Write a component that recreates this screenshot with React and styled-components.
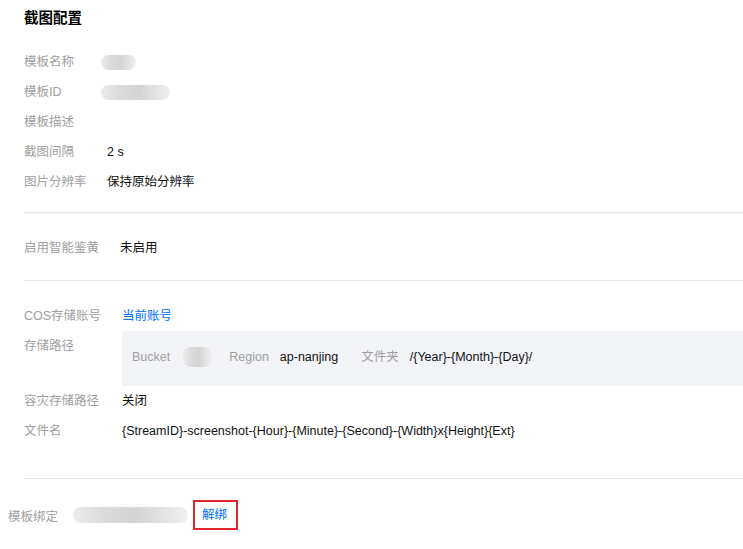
import React from "react";
import styled, { createGlobalStyle } from "styled-components";

const GlobalStyle = createGlobalStyle`
  body {
    margin: 0;
    background: #fff;
    font-family: "Liberation Sans", "Noto Sans CJK SC", Arial, sans-serif;
    font-size: 12.5px;
    color: #000;
  }
`;

const Page = styled.div`
  width: 743px;
  height: 549px;
  overflow: hidden;
`;

const Title = styled.h3`
  margin: 0 0 11px 24px;
  height: 36px;
  line-height: 36px;
  font-size: 14.5px;
  font-weight: bold;
  color: #000;
`;

const Section = styled.div`
  margin-left: ${(p) => p.$indent}px;
  padding: ${(p) => p.$top}px 0 ${(p) => p.$bottom}px;
  border-bottom: ${(p) => (p.$last ? "none" : "1px solid #e6e6e6")};
`;

const Row = styled.div`
  display: flex;
  align-items: flex-start;
  min-height: 30px;
  line-height: 30px;
`;

const Label = styled.div`
  flex: none;
  width: ${(p) => p.$w}px;
  color: #a0a0a0;
  white-space: nowrap;
`;

const Value = styled.div`
  flex: 1;
  color: ${(p) => (p.$link ? "#006eff" : "#111")};
  white-space: nowrap;
`;

const Blur = styled.span`
  display: inline-block;
  vertical-align: middle;
  width: ${(p) => p.$w}px;
  height: ${(p) => p.$h || 15}px;
  border-radius: 8px;
  background: linear-gradient(
    90deg,
    #ececec 0%,
    #dcdcdc 25%,
    #d4d4d4 55%,
    #e4e4e4 80%,
    #f0f0f0 100%
  );
  filter: blur(0.6px);
`;

const PathBox = styled.div`
  flex: 1;
  display: flex;
  align-items: center;
  height: 55px;
  padding: 0 0 3px 10px;
  box-sizing: border-box;
  background: #f3f4f7;
`;

const PathItem = styled.span`
  display: inline-flex;
  align-items: center;
  margin-right: ${(p) => p.$gap}px;
`;

const PathKey = styled.span`
  color: #a0a0a0;
  margin-right: ${(p) => p.$gap || 11}px;
`;

const PathVal = styled.span`
  color: #111;
`;

const Unbind = styled.a`
  display: inline-block;
  margin-left: 5px;
  padding: 0 9px 0 7px;
  height: 26px;
  line-height: 26px;
  border: 2px solid #e1262e;
  color: #006eff;
  text-decoration: none;
  cursor: pointer;
  vertical-align: middle;
`;

const BindRow = styled.div`
  display: flex;
  align-items: center;
  height: 30px;
`;

export default function App() {
  return (
    <Page>
      <GlobalStyle />
      <Title>截图配置</Title>
      <Section $indent={24} $top={0} $bottom={15}>
        <Row>
          <Label $w={77}>模板名称</Label>
          <Value>
            <Blur $w={35} $h={15} />
          </Value>
        </Row>
        <Row>
          <Label $w={77}>模板ID</Label>
          <Value>
            <Blur $w={69} $h={15} />
          </Value>
        </Row>
        <Row>
          <Label $w={77}>模板描述</Label>
          <Value />
        </Row>
        <Row>
          <Label $w={83}>截图间隔</Label>
          <Value>2 s</Value>
        </Row>
        <Row>
          <Label $w={83}>图片分辨率</Label>
          <Value>保持原始分辨率</Value>
        </Row>
      </Section>
      <Section $indent={24} $top={20} $bottom={17}>
        <Row>
          <Label $w={96}>启用智能鉴黄</Label>
          <Value>未启用</Value>
        </Row>
      </Section>
      <Section $indent={24} $top={20} $bottom={32}>
        <Row>
          <Label $w={98}>COS存储账号</Label>
          <Value $link>当前账号</Value>
        </Row>
        <Row>
          <Label $w={98}>存储路径</Label>
          <PathBox>
            <PathItem $gap={17}>
              <PathKey $gap={13}>Bucket</PathKey>
              <Blur $w={29} $h={20} />
            </PathItem>
            <PathItem $gap={23}>
              <PathKey>Region</PathKey>
              <PathVal>ap-nanjing</PathVal>
            </PathItem>
            <PathItem $gap={20}>
              <PathKey>文件夹</PathKey>
              <PathVal>/{"{Year}-{Month}-{Day}"}/</PathVal>
            </PathItem>
          </PathBox>
        </Row>
        <Row>
          <Label $w={98}>容灾存储路径</Label>
          <Value>关闭</Value>
        </Row>
        <Row>
          <Label $w={98}>文件名</Label>
          <Value>
            {"{StreamID}-screenshot-{Hour}-{Minute}-{Second}-{Width}x{Height}{Ext}"}
          </Value>
        </Row>
      </Section>
      <Section $indent={8} $top={21} $bottom={0} $last>
        <BindRow>
          <Label $w={65}>模板绑定</Label>
          <Blur $w={115} $h={16} />
          <Unbind>解绑</Unbind>
        </BindRow>
      </Section>
    </Page>
  );
}
